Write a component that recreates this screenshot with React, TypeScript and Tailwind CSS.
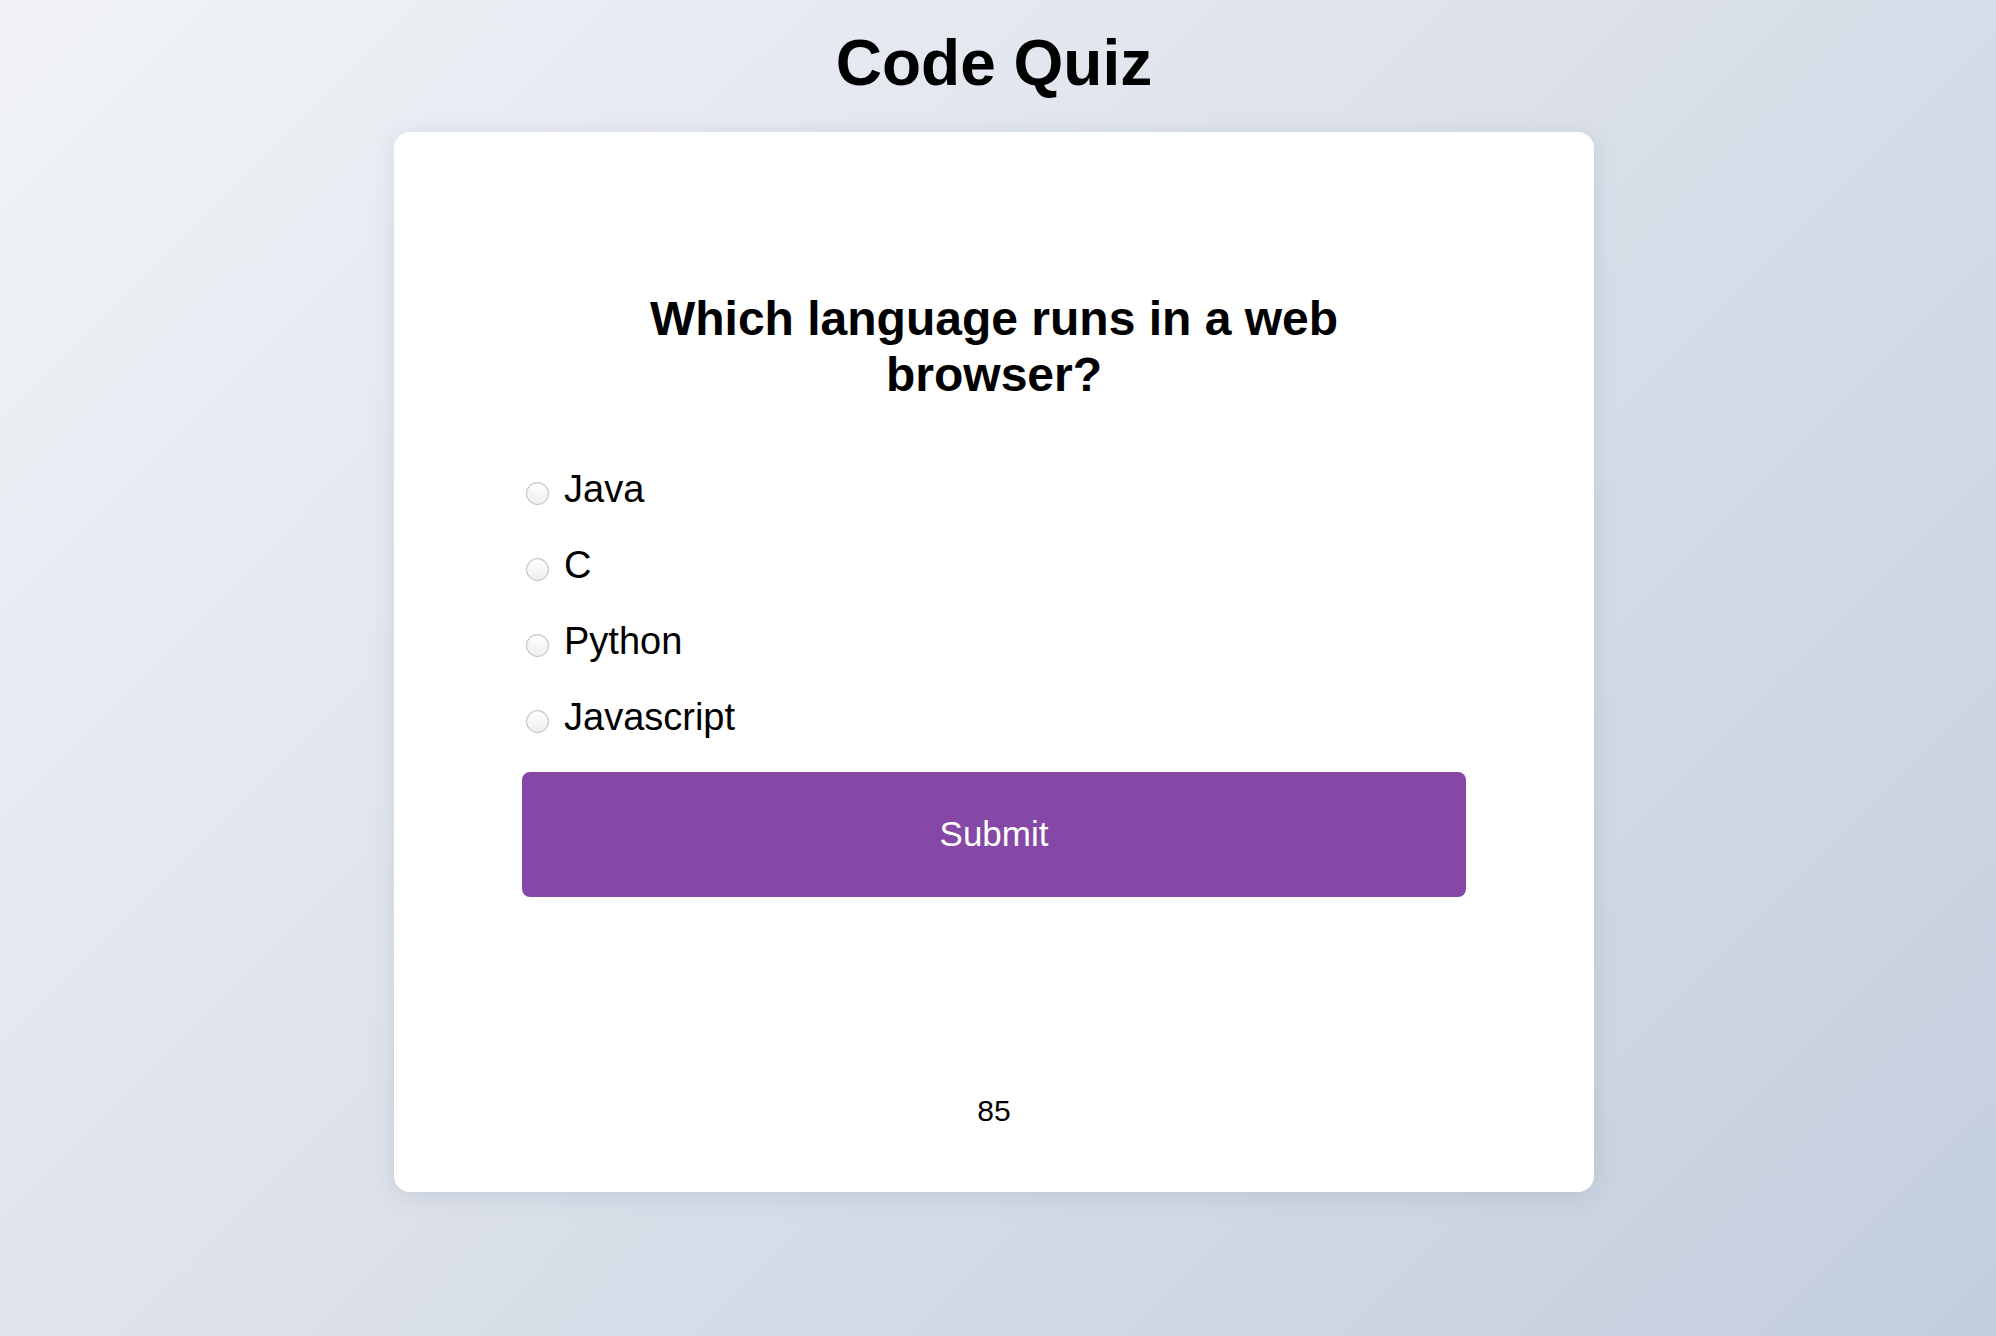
import { useState } from "react";

const options = ["Java", "C", "Python", "Javascript"];

export default function App() {
  const [picked, setPicked] = useState<string | null>(null);

  return (
    <div className="min-h-screen w-full bg-[linear-gradient(135deg,#f1f3f7_0%,#dde2eb_45%,#c3cedd_100%)] pr-2 pt-[27px] pb-10 font-['Liberation_Sans',Arial,sans-serif] text-black">
      <h1 className="text-center text-[64px] font-bold leading-[72px]">Code Quiz</h1>

      <div className="mx-auto mt-[33px] w-[1200px] rounded-2xl bg-white px-32 pt-[159px] pb-[63px] shadow-[0_4px_24px_rgba(60,72,100,0.12)]">
        <h2 className="mx-auto max-w-[760px] text-center text-[48px] font-bold leading-[56px]">
          Which language runs in a web browser?
        </h2>

        <div className="mt-12 flex flex-col">
          {options.map((opt) => (
            <label key={opt} className="flex h-[76px] cursor-pointer items-center gap-[15px] text-[38px] leading-[76px]">
              <input
                type="radio"
                name="answer"
                checked={picked === opt}
                onChange={() => setPicked(opt)}
                className="ml-1 mt-[9px] h-[23px] w-[23px] shrink-0 appearance-none rounded-full border border-[#b9b9b9] bg-[linear-gradient(#ffffff,#efefef)] shadow-[inset_0_1px_1px_rgba(0,0,0,0.06)] checked:border-[6px] checked:border-[#8648a6]"
              />
              <span>{opt}</span>
            </label>
          ))}
        </div>

        <button
          type="button"
          className="mt-[17px] h-[125px] w-full rounded-lg bg-[#8648a6] text-[35px] text-white"
        >
          Submit
        </button>

        <p className="mt-[196px] text-center text-[30px] leading-[36px]">85</p>
      </div>
    </div>
  );
}
